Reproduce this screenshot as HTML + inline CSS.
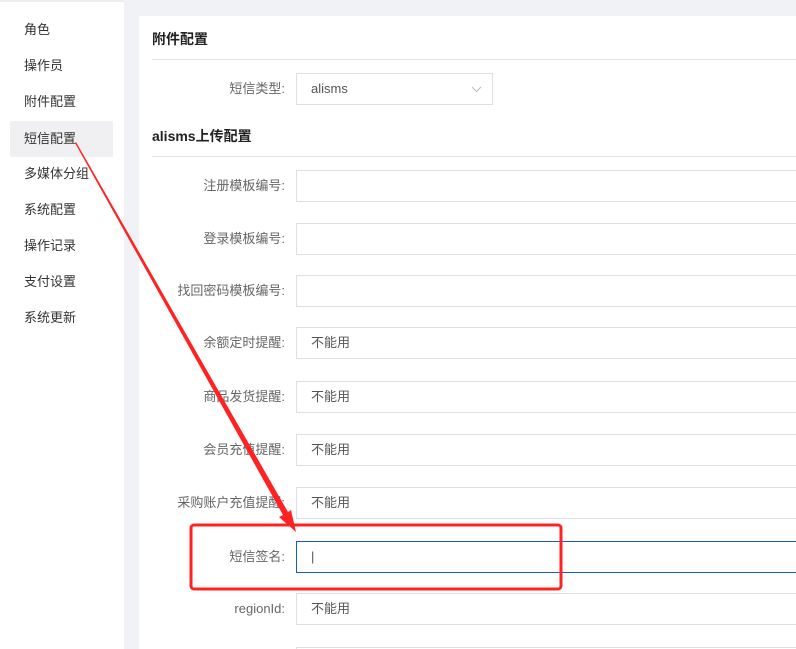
<!DOCTYPE html>
<html style="overflow:hidden;height:649px"><head><meta charset="utf-8"><style>
body{margin:0;width:796px;height:649px;overflow:hidden;background:#f0f2f5;font-family:"Liberation Sans","Noto Sans CJK SC",sans-serif;position:relative}
.side{position:absolute;left:0;top:0;width:124px;height:649px;background:#fff;border-top:2px solid #eee;box-sizing:border-box}
.side div{position:absolute;left:10px;width:103px;height:36px;line-height:36px;padding-left:14px;box-sizing:border-box;font-size:13px;color:#333}
.side .act{background:#f0f0f2}
.card{position:absolute;left:139px;top:16px;width:657px;height:633px;background:#fff}
.h{position:absolute;left:152px;font-size:14px;font-weight:bold;color:#222}
.line{position:absolute;left:152px;right:0;height:1px;background:#e4e4e4}
.lab{position:absolute;left:85px;width:200px;height:32px;line-height:32px;font-size:13px;color:#666;text-align:right}
.inp{position:absolute;left:296px;width:520px;height:32px;border:1px solid #dcdfe6;box-sizing:border-box;font-size:13px;color:#555;padding-left:14px;line-height:30px}
</style></head><body>
<div class="side">
<div style="top:10px">角色</div><div style="top:46px">操作员</div><div style="top:82px">附件配置</div>
<div class="act" style="top:119px">短信配置</div><div style="top:154px">多媒体分组</div><div style="top:190px">系统配置</div>
<div style="top:226px">操作记录</div><div style="top:262px">支付设置</div><div style="top:298px">系统更新</div>
</div>
<div class="card"></div>
<div class="h" style="top:29px">附件配置</div>
<div class="line" style="top:59px"></div>
<div class="lab" style="top:73px">短信类型:</div>
<div class="inp" style="top:73px;width:197px">alisms<svg style="position:absolute;right:10px;top:12px" width="11" height="7"><path d="M1 1l4.5 4.5L10 1" fill="none" stroke="#bbb"/></svg></div>
<div class="h" style="top:126px">alisms上传配置</div>
<div class="line" style="top:156px"></div>
<div class="lab" style="top:170px">注册模板编号:</div><div class="inp" style="top:170px"></div>
<div class="lab" style="top:223px">登录模板编号:</div><div class="inp" style="top:223px"></div>
<div class="lab" style="top:275px">找回密码模板编号:</div><div class="inp" style="top:275px"></div>
<div class="lab" style="top:327px">余额定时提醒:</div><div class="inp" style="top:327px">不能用</div>
<div class="lab" style="top:381px">商品发货提醒:</div><div class="inp" style="top:381px">不能用</div>
<div class="lab" style="top:434px">会员充值提醒:</div><div class="inp" style="top:434px">不能用</div>
<div class="lab" style="top:487px">采购账户充值提醒:</div><div class="inp" style="top:487px">不能用</div>
<div class="lab" style="top:541px">短信签名:</div><div class="inp" style="top:541px;border-color:#1a56db">|</div>
<div class="lab" style="top:593px">regionId:</div><div class="inp" style="top:593px">不能用</div>
<div class="inp" style="top:647px"></div>
<svg style="position:absolute;left:0;top:0" width="796" height="649">
<polygon points="75,143 76,142 288,512 291,510 296,532 279,517 283,515" fill="#f22"/>
<rect x="191" y="525" width="370" height="64" rx="3" fill="none" stroke="#f22" stroke-width="3"/>
</svg>
</body></html>
